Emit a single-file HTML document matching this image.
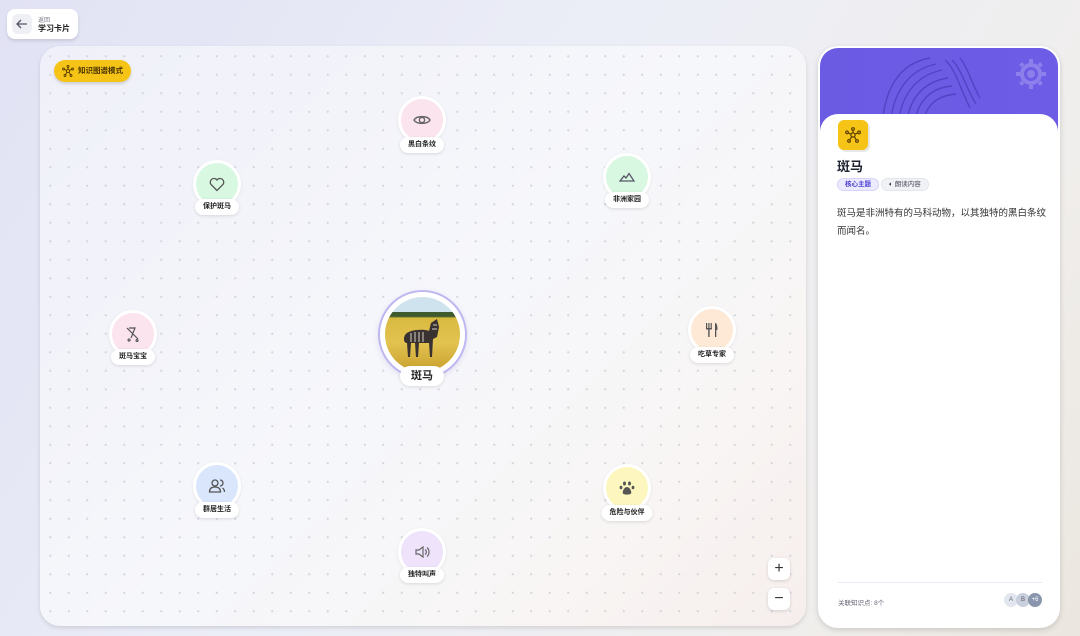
<!DOCTYPE html>
<html><head><meta charset="utf-8"><style>
*{box-sizing:border-box;margin:0;padding:0}
body{width:1080px;height:636px;overflow:hidden;font-family:"Liberation Sans","Noto Sans CJK SC",sans-serif;background:linear-gradient(120deg,#e1e2f4 0%,#eceef7 45%,#f0eeec 80%,#ebe6df 100%);position:relative;color:#1f2330}
.back{position:absolute;left:7px;top:9px;width:71px;height:30px;background:#fff;border-radius:8px;box-shadow:0 2px 3px rgba(0,0,0,.12)}
.back .ic{position:absolute;left:5px;top:5px;width:20px;height:20px;background:#eef0f5;border-radius:6px}
.back .t1{position:absolute;left:31px;top:6px;font-size:6px;color:#778}
.back .t2{position:absolute;left:31px;top:14px;font-size:8px;font-weight:bold;color:#222}
.canvas{position:absolute;left:40px;top:46px;width:766px;height:580px;border-radius:20px;background:radial-gradient(circle,#d3d6de 0.9px,transparent 1.3px) 1px 1px/18.5px 18.5px,linear-gradient(135deg,#eff0f9 0%,#f6f7fb 50%,#f8f5f4 80%,#f6eeec 100%);box-shadow:0 2px 4px rgba(0,0,0,.12);overflow:hidden}
.mode{position:absolute;left:54px;top:60px;width:77px;height:22px;border-radius:11px;background:#f6c416;box-shadow:0 2px 3px rgba(0,0,0,.15);font-size:7.5px;font-weight:bold;color:#4a3500;line-height:22px;padding-left:24px}
.node{position:absolute;width:48px;height:48px;margin:-24px 0 0 -24px;border-radius:50%;border:3px solid #fff;box-shadow:0 1px 3px rgba(0,0,0,.08);display:flex;align-items:center;justify-content:center}
.lbl{position:absolute;height:16px;transform:translateX(-50%);background:#fff;border-radius:8px;padding:0 8px;font-size:7px;font-weight:bold;line-height:16px;box-shadow:0 1px 3px rgba(0,0,0,.12);white-space:nowrap;color:#222}
.zb{position:absolute;width:22px;height:22px;background:#fff;border-radius:6px;box-shadow:0 1px 3px rgba(0,0,0,.15);text-align:center;line-height:21px;font-size:16px;color:#333}
.panel{position:absolute;left:818px;top:46px;width:242px;height:582px;border-radius:20px;background:#fff;border:2px solid #fff;box-shadow:0 2px 6px rgba(0,0,0,.15);overflow:hidden}
.hdr{position:absolute;left:0;top:0;width:238px;height:90px;background:linear-gradient(90deg,#6b5be3,#6d5ce6);overflow:hidden}
.body{position:absolute;left:0;top:66px;width:238px;height:520px;background:#fff;border-radius:18px 18px 0 0}
</style></head><body>
<div class="back"><div class="ic"><svg width="20" height="20" viewBox="0 0 20 20"><path d="M15 10H5M9 6L5 10L9 14" stroke="#556" stroke-width="1.3" fill="none"/></svg></div><div class="t1">返回</div><div class="t2">学习卡片</div></div>
<div class="canvas"></div>
<div class="mode"><svg style="position:absolute;left:8px;top:5px" width="12" height="12" viewBox="0 0 12 12" fill="none" stroke="#5a3d00" stroke-width="0.9"><circle cx="6" cy="6" r="1.6"/><circle cx="6" cy="1.5" r="1"/><circle cx="1.5" cy="4" r="1"/><circle cx="10.5" cy="4" r="1"/><circle cx="3" cy="10.5" r="1"/><circle cx="9" cy="10.5" r="1"/><path d="M6 2.5V4.4M2.4 4.4L4.5 5.4M9.6 4.4L7.5 5.4M3.5 9.6L5 7.3M8.5 9.6L7 7.3"/></svg>知识图谱模式</div>

<div class="node" style="left:422px;top:120px;background:#fce4ef"><svg width="18" height="14" viewBox="0 0 18 14" fill="none" stroke="#666" stroke-width="1.4"><path d="M1 7C3.5 2.5 14.5 2.5 17 7C14.5 11.5 3.5 11.5 1 7Z"/><circle cx="9" cy="7" r="2.6"/></svg></div>
<div class="lbl" style="left:422px;top:137px">黑白条纹</div>
<div class="node" style="left:217px;top:184px;background:#d8f8e2"><svg width="16" height="15" viewBox="0 0 16 15" fill="none" stroke="#555" stroke-width="1.3"><path d="M8 13.5L2 7.5A3.3 3.3 0 0 1 8 3A3.3 3.3 0 0 1 14 7.5Z"/></svg></div>
<div class="lbl" style="left:217px;top:199px">保护斑马</div>
<div class="node" style="left:627px;top:177px;background:#d8f8e2"><svg width="16" height="10" viewBox="0 0 16 10" fill="none" stroke="#556" stroke-width="1.3"><path d="M1 9L5 4L7 6L10 1.5L15 9Z"/></svg></div>
<div class="lbl" style="left:627px;top:192px">非洲家园</div>
<div class="node" style="left:133px;top:334px;background:#fce4ef"><svg width="14" height="16" viewBox="0 0 14 16" fill="none" stroke="#555" stroke-width="1.2"><path d="M1 2L12 13M3 2H9L5 12M3 13A1 1 0 1 0 3.1 13M11 13.5A1 1 0 1 0 11.1 13.5"/></svg></div>
<div class="lbl" style="left:133px;top:349px">斑马宝宝</div>
<div class="node" style="left:712px;top:330px;background:#fde9d6"><svg width="14" height="16" viewBox="0 0 14 16" fill="#555"><rect x="1" y="1" width="1.2" height="6"/><rect x="3.3" y="1" width="1.2" height="6"/><rect x="5.6" y="1" width="1.2" height="6"/><rect x="1" y="6" width="5.8" height="1.5"/><rect x="3.2" y="7" width="1.4" height="8"/><path d="M10 1C12 1 12.5 4 12.5 8H11.3V15H10Z"/></svg></div>
<div class="lbl" style="left:712px;top:347px">吃草专家</div>
<div class="node" style="left:217px;top:486px;background:#d9e6fc"><svg width="18" height="16" viewBox="0 0 18 16" fill="none" stroke="#555" stroke-width="1.3"><circle cx="7" cy="5" r="3"/><path d="M1.5 14C1.5 10 4 9 7 9S12.5 10 12.5 14Z"/><path d="M12 2A3 3 0 0 1 12 8M14.5 10C16 11 16.5 12 16.5 14"/></svg></div>
<div class="lbl" style="left:217px;top:502px">群居生活</div>
<div class="node" style="left:627px;top:488px;background:#fdf7bf"><svg width="16" height="16" viewBox="0 0 16 16" fill="#555"><ellipse cx="5.5" cy="3.5" rx="1.5" ry="2"/><ellipse cx="10.5" cy="3.5" rx="1.5" ry="2"/><ellipse cx="2" cy="7.5" rx="1.4" ry="1.8"/><ellipse cx="14" cy="7.5" rx="1.4" ry="1.8"/><path d="M8 7C5 7 3 12 4 13.5C5 15 11 15 12 13.5C13 12 11 7 8 7Z"/></svg></div>
<div class="lbl" style="left:627px;top:505px">危险与伙伴</div>
<div class="node" style="left:422px;top:552px;background:#efe3fc"><svg width="16" height="14" viewBox="0 0 16 14" fill="none" stroke="#666" stroke-width="1.2"><path d="M2 5H5L9 2V12L5 9H2Z"/><path d="M11 4.5A3 3 0 0 1 11 9.5M13 2.5A6 6 0 0 1 13 11.5"/></svg></div>
<div class="lbl" style="left:422px;top:567px">独特叫声</div>

<div style="position:absolute;left:378px;top:290px;width:89px;height:89px;border-radius:50%;border:2.5px solid #bfb8f0;background:#fff;box-shadow:0 2px 6px rgba(100,90,200,.15)"></div>
<div style="position:absolute;left:385px;top:297px;width:75px;height:75px;border-radius:50%;overflow:hidden;background:linear-gradient(180deg,#cfe3ef 0%,#cfe3ef 20%,#3f5a2c 20%,#3f5a2c 26%,#d8b940 28%,#e3c350 60%,#c9a02e 100%)">
<svg width="75" height="75" viewBox="0 0 75 75"><path d="M20 38C24 32 40 32 44 34L46 26L52 22L54 30L52 40L48 42L47 60H45L44 46H34L33 60H31L30 46H26L25 60H23L22 46C19 46 18 42 20 38Z" fill="#3a3230"/><g stroke="#d8d0c8" stroke-width="1"><path d="M26 36V45M30 35V45M34 35V45M38 35V45M48 28L52 28M47 32H52"/></g></svg></div>
<div class="lbl" style="left:422px;top:366px;height:20px;line-height:20px;font-size:11px;padding:0 11px;border-radius:10px">斑马</div>

<div class="zb" style="left:768px;top:558px">+</div>
<div class="zb" style="left:768px;top:588px">−</div>

<div class="panel">
<div class="hdr"><svg width="238" height="90" viewBox="0 0 238 90"><g fill="none" stroke="#4b38b8" stroke-width="1.4" opacity=".7"><path d="M62 80C64 40 80 15 110 10"/><path d="M70 80C72 45 88 22 116 16"/><path d="M78 80C80 48 95 28 122 22"/><path d="M86 80C88 52 102 34 128 30"/><path d="M94 80C96 56 108 40 132 38"/><path d="M102 80C104 60 114 48 136 46"/><path d="M125 12C135 20 140 40 150 60"/><path d="M132 12C142 22 146 40 156 56"/><path d="M140 10C148 20 152 36 160 50"/></g><g fill="none" stroke="#a598f0" stroke-width="4" opacity=".6"><circle cx="211" cy="26" r="9"/><path d="M211 11V15M211 37V41M196 26H200M222 26H226M200.5 15.5L203 18M219 34L221.5 36.5M200.5 36.5L203 34M219 18L221.5 15.5"/></g><circle cx="211" cy="26" r="4" fill="#a598f0" opacity=".6"/></svg></div>
<div class="body">
<div style="position:absolute;left:18px;top:6px;width:30px;height:30px;background:#f6c416;border-radius:6px;box-shadow:2px 2px 0 #e8e8e8"><svg style="position:absolute;left:7px;top:7px" width="16" height="16" viewBox="0 0 12 12" fill="none" stroke="#5a3d00" stroke-width="0.9"><circle cx="6" cy="6" r="1.6"/><circle cx="6" cy="1.5" r="1"/><circle cx="1.5" cy="4" r="1"/><circle cx="10.5" cy="4" r="1"/><circle cx="3" cy="10.5" r="1"/><circle cx="9" cy="10.5" r="1"/><path d="M6 2.5V4.4M2.4 4.4L4.5 5.4M9.6 4.4L7.5 5.4M3.5 9.6L5 7.3M8.5 9.6L7 7.3"/></svg></div>
<div style="position:absolute;left:17px;top:42px;font-size:13px;font-weight:bold">斑马</div>
<div style="position:absolute;left:17px;top:64px;height:13px;padding:0 7px;border-radius:7px;background:#ecebfd;border:1px solid #d6d2fa;color:#4b3dd0;font-size:6.5px;font-weight:bold;line-height:11px">核心主题</div>
<div style="position:absolute;left:61px;top:64px;height:13px;padding:0 7px;border-radius:7px;background:#f1f2f6;border:1px solid #e3e5ec;color:#445;font-size:6.5px;line-height:11px">🔈︎ 朗读内容</div>
<div style="position:absolute;left:17px;top:91px;width:210px;font-size:9.5px;line-height:18px;color:#333">斑马是非洲特有的马科动物，以其独特的黑白条纹而闻名。</div>
<div style="position:absolute;left:18px;top:468px;width:204px;border-top:1px solid #e8ebf2"></div>
<div style="position:absolute;left:18px;top:483px;font-size:6.5px;color:#667">关联知识点: 8个</div>
<div style="position:absolute;left:184px;top:479px;width:14px;height:14px;border-radius:50%;background:#e2e6ef;font-size:6px;color:#667;text-align:center;line-height:14px">A</div>
<div style="position:absolute;left:196px;top:479px;width:14px;height:14px;border-radius:50%;background:#c9d0dd;font-size:6px;color:#556;text-align:center;line-height:14px">B</div>
<div style="position:absolute;left:208px;top:479px;width:14px;height:14px;border-radius:50%;background:#8a96ad;font-size:6px;color:#fff;text-align:center;line-height:14px">+6</div>
</div></div>
</body></html>
